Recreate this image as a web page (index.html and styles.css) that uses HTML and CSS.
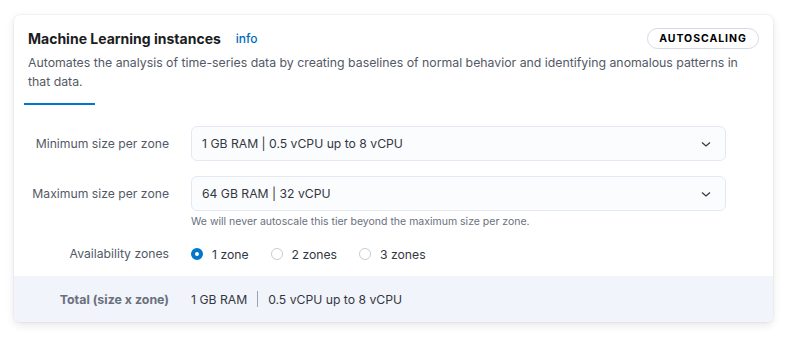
FILE: index.html
```html
<!DOCTYPE html>
<html lang="en">
<head>
    <meta charset="UTF-8">
    <meta name="viewport" content="width=device-width, initial-scale=1.0">
    <title>Machine Learning instances</title>
    <link rel="stylesheet" href="styles.css">
</head>
<body>

<div class="card">
    <div class="card-head">
        <div class="title-row">
            <h2 class="title">Machine Learning instances</h2>
            <a href="#" class="info-link">info</a>
            <span class="badge">AUTOSCALING</span>
        </div>
        <p class="desc">Automates the analysis of time-series data by creating baselines of normal behavior and identifying anomalous patterns in that data.</p>
        <div class="tab-line"></div>
    </div>

    <div class="form">
        <label class="field-label">Minimum size per zone</label>
        <div class="select">
            <span>1 GB RAM | 0.5 vCPU up to 8 vCPU</span>
            <svg class="chevron" width="12" height="12" viewBox="0 0 12 12"><path d="M2 4.5 L6 8 L10 4.5" fill="none" stroke="#343741" stroke-width="1.2"/></svg>
        </div>

        <label class="field-label">Maximum size per zone</label>
        <div class="field">
            <div class="select">
                <span>64 GB RAM | 32 vCPU</span>
                <svg class="chevron" width="12" height="12" viewBox="0 0 12 12"><path d="M2 4.5 L6 8 L10 4.5" fill="none" stroke="#343741" stroke-width="1.2"/></svg>
            </div>
            <p class="help">We will never autoscale this tier beyond the maximum size per zone.</p>
        </div>

        <label class="field-label short">Availability zones</label>
        <div class="radios">
            <label class="radio"><span class="dot checked"></span>1 zone</label>
            <label class="radio"><span class="dot"></span>2 zones</label>
            <label class="radio"><span class="dot"></span>3 zones</label>
        </div>
    </div>

    <div class="total">
        <span class="total-label">Total (size x zone)</span>
        <span class="total-value">1 GB RAM<span class="divider"></span>0.5 vCPU up to 8 vCPU</span>
    </div>
</div>

</body>
</html>
```

FILE: styles.css
```css
/* Basic reset */
* {
    margin: 0;
    padding: 0;
    box-sizing: border-box;
}

body {
    font-family: Inter, "Noto Sans", sans-serif;
    color: #343741;
    background: #fff;
    padding: 15px 14px;
}

.card {
    width: 759px;
    background: #fff;
    border-radius: 6px;
    box-shadow: 0 3px 8px rgba(0, 0, 0, 0.1), 0 0 2px rgba(0, 0, 0, 0.12);
    overflow: hidden;
}

.card-head {
    padding: 13px 14px 0 14px;
}

.title-row {
    display: flex;
    align-items: center;
    height: 21px;
}

.title {
    font-size: 14px;
    font-weight: 700;
    color: #1a1c21;
}

.info-link {
    margin-left: 15px;
    font-size: 12px;
    font-weight: 500;
    color: #006bb8;
    text-decoration: none;
}

.badge {
    margin-left: auto;
    height: 21px;
    width: 112px;
    border: 1px solid #d3dae6;
    border-radius: 11px;
    font-size: 10.5px;
    font-weight: 700;
    letter-spacing: 0.09em;
    color: #000;
    display: flex;
    align-items: center;
    justify-content: center;
}

.desc {
    margin-top: 4px;
    font-size: 12.3px;
    line-height: 19px;
    color: #535966;
}

.tab-line {
    margin-top: 12px;
    margin-left: -4px;
    width: 71px;
    height: 2px;
    background: #0077cc;
}

.form {
    display: grid;
    grid-template-columns: 141px 535px;
    column-gap: 22px;
    row-gap: 15px;
    align-items: start;
    padding: 21px 0 12px 14px;
}

.field-label {
    font-size: 12.2px;
    color: #535966;
    text-align: right;
    line-height: 35px;
    white-space: nowrap;
}

.field-label.short {
    line-height: 20px;
}

.select {
    height: 35px;
    background: #fbfcfd;
    border: 1px solid #e3e8f2;
    border-radius: 6px;
    display: flex;
    align-items: center;
    justify-content: space-between;
    padding: 0 13px 0 10px;
    font-size: 12.2px;
    color: #343741;
}

.help {
    margin-top: 4px;
    font-size: 10.5px;
    line-height: 14px;
    color: #69707d;
}

.radios {
    display: flex;
    align-items: center;
    gap: 22px;
    height: 20px;
}

.radio {
    display: flex;
    align-items: center;
    gap: 9px;
    font-size: 12.2px;
    color: #343741;
}

.dot {
    width: 12px;
    height: 12px;
    border-radius: 50%;
    border: 1px solid #c6ccd6;
    background: #fff;
}

.dot.checked {
    border: 4px solid #0077cc;
}

.total {
    background: #f1f4fa;
    height: 46px;
    display: flex;
    align-items: center;
    padding-left: 14px;
    font-size: 12.2px;
}

.total-label {
    width: 141px;
    text-align: right;
    font-weight: 700;
    color: #69707d;
    font-size: 12.4px;
}

.total-value {
    margin-left: 22px;
    display: flex;
    align-items: center;
    color: #343741;
}

.divider {
    width: 1px;
    height: 16px;
    background: #98a2b3;
    margin: 0 10px;
}
```
